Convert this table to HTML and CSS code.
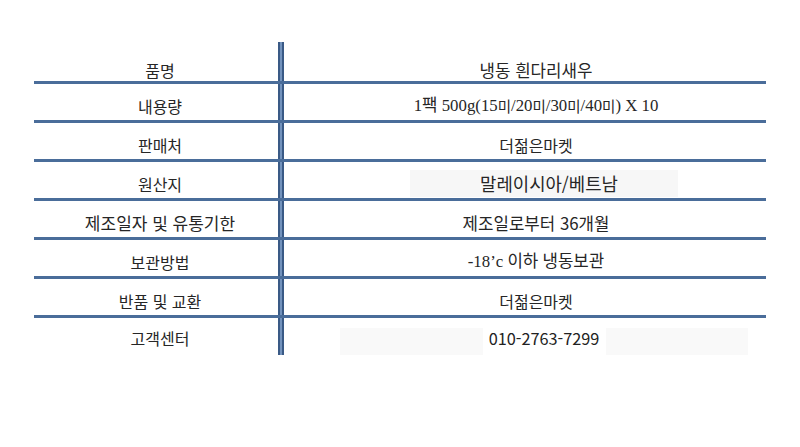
FILE: index.html
```html
<!DOCTYPE html>
<html lang="ko">
<head>
<meta charset="utf-8">
<title>상품 정보</title>
<link rel="stylesheet" href="styles.css">
</head>
<body>
<div class="spec">
  <div class="row row-first">
    <div class="label">품명</div><div class="divider"></div>
    <div class="value value-lg">냉동 흰다리새우</div>
  </div>
  <div class="row">
    <div class="label">내용량</div><div class="divider"></div>
    <div class="value serif">1팩 500g(15<span class="mi">미</span>/20<span class="mi">미</span>/30<span class="mi">미</span>/40<span class="mi">미</span>) X 10</div>
  </div>
  <div class="row">
    <div class="label">판매처</div><div class="divider"></div>
    <div class="value">더젊은마켓</div>
  </div>
  <div class="row row-boxed">
    <div class="label">원산지</div><div class="divider"></div>
    <div class="value value-xl"><span class="box box-origin">말레이시아/베트남</span></div>
  </div>
  <div class="row">
    <div class="label label-long">제조일자 및 유통기한</div><div class="divider"></div>
    <div class="value value-lg">제조일로부터 36개월</div>
  </div>
  <div class="row">
    <div class="label">보관방법</div><div class="divider"></div>
    <div class="value serif">-18’c 이하 냉동보관</div>
  </div>
  <div class="row">
    <div class="label">반품 및 교환</div><div class="divider"></div>
    <div class="value">더젊은마켓</div>
  </div>
  <div class="row row-last">
    <div class="label">고객센터</div><div class="divider"></div>
    <div class="value"><span class="box box-phone"><span class="phone">010-2763-7299</span></span></div>
  </div>
</div>
</body>
</html>
```

FILE: styles.css
```css
html, body {
  margin: 0;
  padding: 0;
  background: #ffffff;
}

body {
  font-family: "Noto Sans CJK KR", "Noto Sans", sans-serif;
  color: #262626;
  font-size: 16px;
}

.spec {
  margin: 42px 0 0 34px;
  width: 732px;
}

.row {
  display: grid;
  grid-template-columns: 244px 6px 1fr;
  height: 36px;
  border-bottom: 3px solid #4a6d9a;
}

.row-first {
  height: 39px;
}

.row-last {
  height: 37px;
  border-bottom: none;
}

.label,
.value {
  display: flex;
  justify-content: center;
  align-items: flex-start;
  padding-top: 12px;
  line-height: 20px;
  white-space: nowrap;
}

.row-first .label,
.row-first .value {
  padding-top: 18px;
}

.row-last .label {
  padding-top: 10px;
}

.label {
  padding-left: 8px;
}

.label-long {
  font-size: 17px;
}

.value {
  padding-left: 22px;
}

.value-lg {
  font-size: 16.8px;
}

.value-xl {
  font-size: 17.8px;
}

.divider {
  background: linear-gradient(to right, #3a5a86 0, #3a5a86 2px, #7393bd 2px, #7393bd 4px, #3a5a86 4px, #3a5a86 6px);
}

.serif {
  font-family: "Liberation Serif", "Noto Sans CJK KR", serif;
  font-size: 16.8px;
}

.mi {
  font-family: "Noto Sans CJK KR", sans-serif;
  font-size: 14.5px;
}

.row-boxed .value {
  padding-top: 8px;
}

.box {
  display: flex;
  justify-content: center;
  background: #f7f7f7;
}

.box-origin {
  width: 258px;
  height: 24px;
  padding: 3px 0 0 10px;
  margin-left: 16px;
}

.row-last .value {
  padding-top: 10px;
}

.box-phone {
  width: 408px;
  height: 29px;
  margin-left: 16px;
  background: #f9f9f9;
}

.phone {
  display: block;
  width: 123px;
  height: 29px;
  text-align: center;
  background: #ffffff;
  font-size: 16.3px;
  color: #222222;
}
```
